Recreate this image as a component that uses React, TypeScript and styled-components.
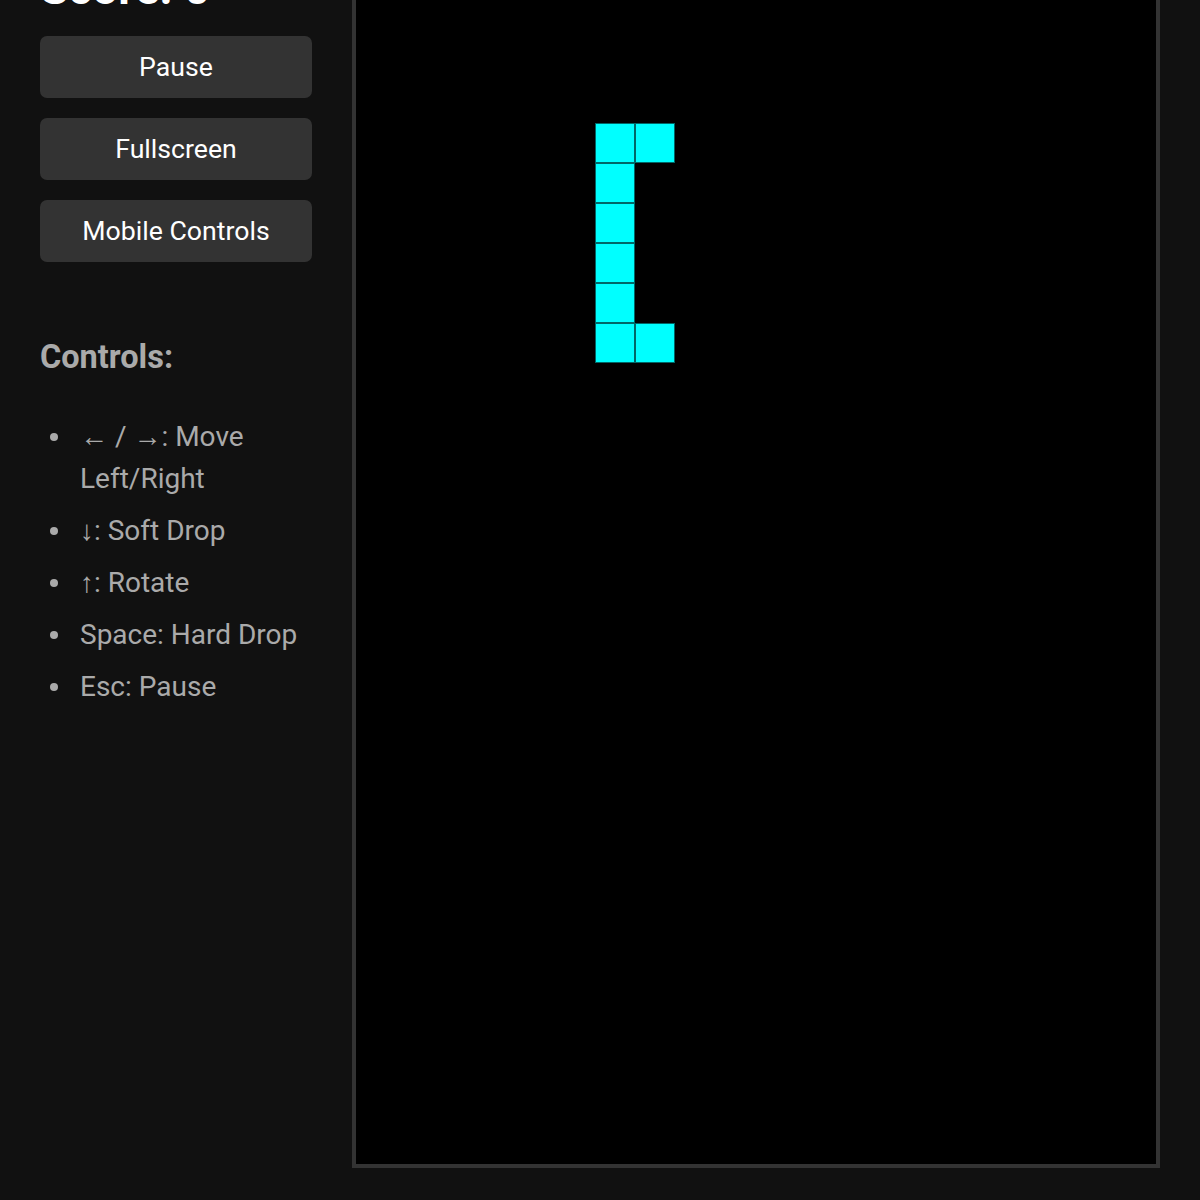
import React from "react";
import styled, { createGlobalStyle } from "styled-components";

const GlobalStyle = createGlobalStyle`
  html, body {
    margin: 0;
    padding: 0;
    background: #111;
    overflow: hidden;
  }
  body {
    font-family: Roboto, "Liberation Sans", Arial, sans-serif;
    color: #fff;
  }
`;

const Viewport = styled.div`
  height: 100vh;
  display: flex;
  flex-direction: column;
  justify-content: flex-end;
  padding: 0 40px 32px;
  box-sizing: border-box;
  overflow: hidden;
`;

const Layout = styled.div`
  display: flex;
  align-items: flex-start;
  gap: 40px;
`;

const Sidebar = styled.aside`
  width: 272px;
  flex: none;
  display: flex;
  flex-direction: column;
`;

const Score = styled.h1`
  margin: 0 0 20px;
  font-size: 46px;
  font-weight: 700;
  line-height: 56px;
  color: #fff;
`;

const ButtonStack = styled.div`
  display: flex;
  flex-direction: column;
  gap: 20px;
`;

const ActionButton = styled.button`
  height: 62px;
  border: none;
  border-radius: 7px;
  background: #333;
  color: #fff;
  font-family: Roboto, "Liberation Sans", Arial, sans-serif;
  font-size: 26.67px;
  cursor: pointer;
`;

const ControlsTitle = styled.h3`
  margin: 76px 0 40px;
  font-size: 32.5px;
  font-weight: 700;
  line-height: normal;
  color: #aaa;
`;

const KeyList = styled.ul`
  margin: 0;
  padding-left: 40px;
  list-style: none;
  color: #aaa;
  font-size: 28px;
  line-height: 42px;
`;

const KeyItem = styled.li`
  position: relative;
  margin-bottom: 10px;

  &::before {
    content: "";
    position: absolute;
    left: -30px;
    top: 17px;
    width: 8px;
    height: 8px;
    border-radius: 50%;
    background: #aaa;
  }
`;

const Board = styled.div`
  width: 800px;
  height: 1200px;
  flex: none;
  border: 4px solid #333;
  background: #000;
  line-height: 0;
`;

const CELL = 40;
const COLS = 20;
const ROWS = 30;

// active piece cells as [col, row]
const piece: [number, number][] = [
  [6, 4], [7, 4],
  [6, 5], [6, 6], [6, 7], [6, 8],
  [6, 9], [7, 9],
];

const controls = [
  "← / →: Move Left/Right",
  "↓: Soft Drop",
  "↑: Rotate",
  "Space: Hard Drop",
  "Esc: Pause",
];

export default function App() {
  return (
    <>
      <GlobalStyle />
      <Viewport>
        <Layout>
          <Sidebar>
            <Score>Score: 0</Score>
            <ButtonStack>
              <ActionButton>Pause</ActionButton>
              <ActionButton>Fullscreen</ActionButton>
              <ActionButton>Mobile Controls</ActionButton>
            </ButtonStack>
            <ControlsTitle>Controls:</ControlsTitle>
            <KeyList>
              {controls.map((c) => (
                <KeyItem key={c}>{c}</KeyItem>
              ))}
            </KeyList>
          </Sidebar>
          <Board>
            <svg width={COLS * CELL} height={ROWS * CELL} viewBox={`0 0 ${COLS * CELL} ${ROWS * CELL}`}>
              {piece.map(([c, r]) => (
                <rect
                  key={`${c}-${r}`}
                  x={c * CELL - 0.5}
                  y={r * CELL - 0.5}
                  width={CELL - 1}
                  height={CELL - 1}
                  fill="#00ffff"
                  stroke="#006767"
                  strokeWidth={1}
                />
              ))}
            </svg>
          </Board>
        </Layout>
      </Viewport>
    </>
  );
}
